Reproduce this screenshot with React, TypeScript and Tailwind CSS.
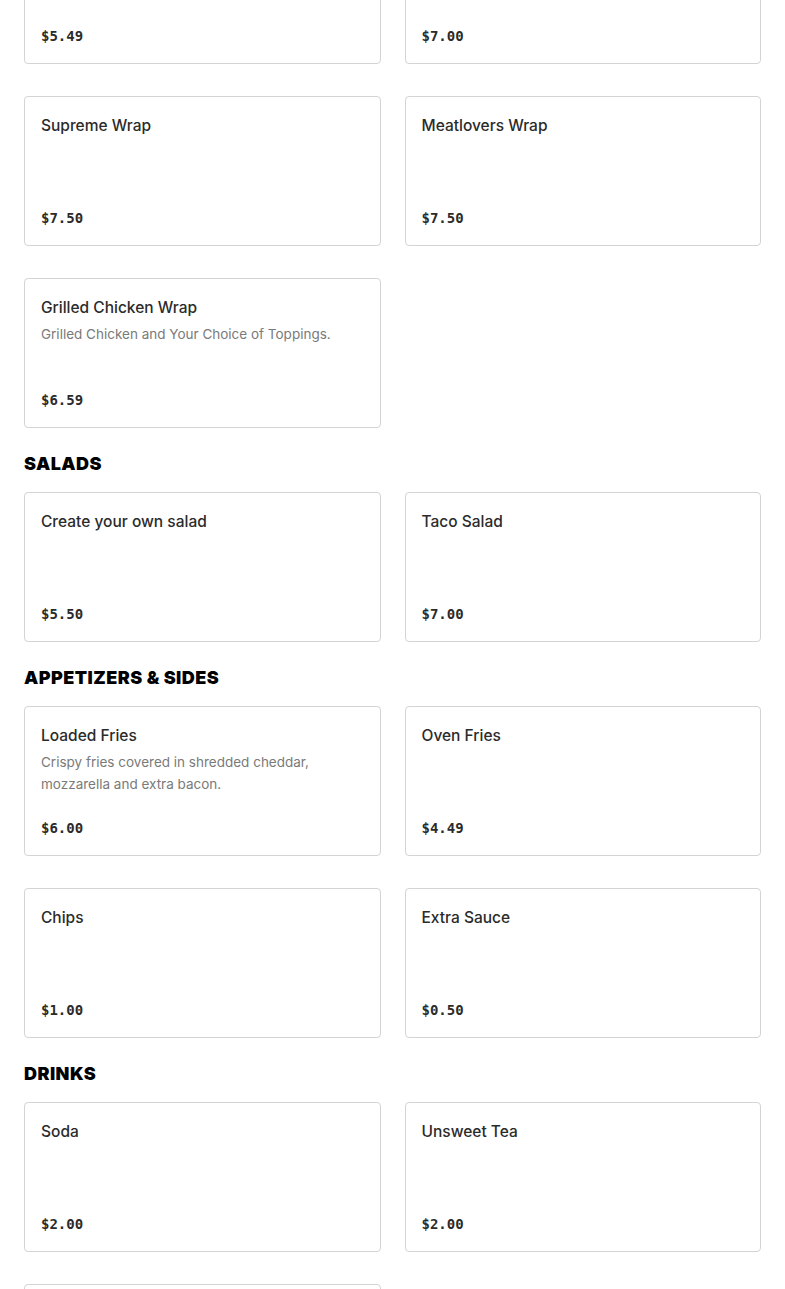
import React from 'react';

interface Item {
  name: string;
  price: string;
  description?: string;
}

interface Section {
  title?: string;
  items: Item[];
}

const sections: Section[] = [
  {
    items: [
      { name: 'Veggie Wrap', price: '$5.49' },
      { name: 'Buffalo Chicken Wrap', price: '$7.00' },
      { name: 'Supreme Wrap', price: '$7.50' },
      { name: 'Meatlovers Wrap', price: '$7.50' },
      {
        name: 'Grilled Chicken Wrap',
        price: '$6.59',
        description: 'Grilled Chicken and Your Choice of Toppings.',
      },
    ],
  },
  {
    title: 'Salads',
    items: [
      { name: 'Create your own salad', price: '$5.50' },
      { name: 'Taco Salad', price: '$7.00' },
    ],
  },
  {
    title: 'Appetizers & Sides',
    items: [
      {
        name: 'Loaded Fries',
        price: '$6.00',
        description: 'Crispy fries covered in shredded cheddar, mozzarella and extra bacon.',
      },
      { name: 'Oven Fries', price: '$4.49' },
      { name: 'Chips', price: '$1.00' },
      { name: 'Extra Sauce', price: '$0.50' },
    ],
  },
  {
    title: 'Drinks',
    items: [
      { name: 'Soda', price: '$2.00' },
      { name: 'Unsweet Tea', price: '$2.00' },
      { name: 'Sweet Tea', price: '$2.00' },
    ],
  },
];

const MenuCard: React.FC<{ item: Item }> = ({ item }) => (
  <div className="flex h-[150px] flex-col justify-between rounded-[4px] border border-[#d4d4d4] bg-white px-4 pb-[15px] pt-[17px]">
    <div>
      <h3 className="font-['Inter',sans-serif] text-[15.5px] font-medium leading-6 text-[#2b2b2b]">
        {item.name}
      </h3>
      {item.description && (
        <p className="mt-[3px] font-['Inter',sans-serif] text-[13.5px] leading-[22px] text-[#7a7a7a]">
          {item.description}
        </p>
      )}
    </div>
    <span className="font-['DejaVu_Sans_Mono',monospace] text-[14px] font-bold leading-6 text-[#2b2b2b]">
      {item.price}
    </span>
  </div>
);

export default function App() {
  return (
    <div className="min-h-screen overflow-hidden bg-white">
      <div className="-mt-[86px] px-6">
        {sections.map((section, i) => (
          <div key={i}>
            {section.title && (
              <h2 className="mb-[15px] mt-[23px] font-['Inter',sans-serif] text-[18px] font-black uppercase leading-[26px] tracking-[0.025em] text-black">
                {section.title}
              </h2>
            )}
            <div className="grid grid-cols-2 gap-x-6 gap-y-8">
              {section.items.map((item) => (
                <MenuCard key={item.name} item={item} />
              ))}
            </div>
          </div>
        ))}
      </div>
    </div>
  );
}
